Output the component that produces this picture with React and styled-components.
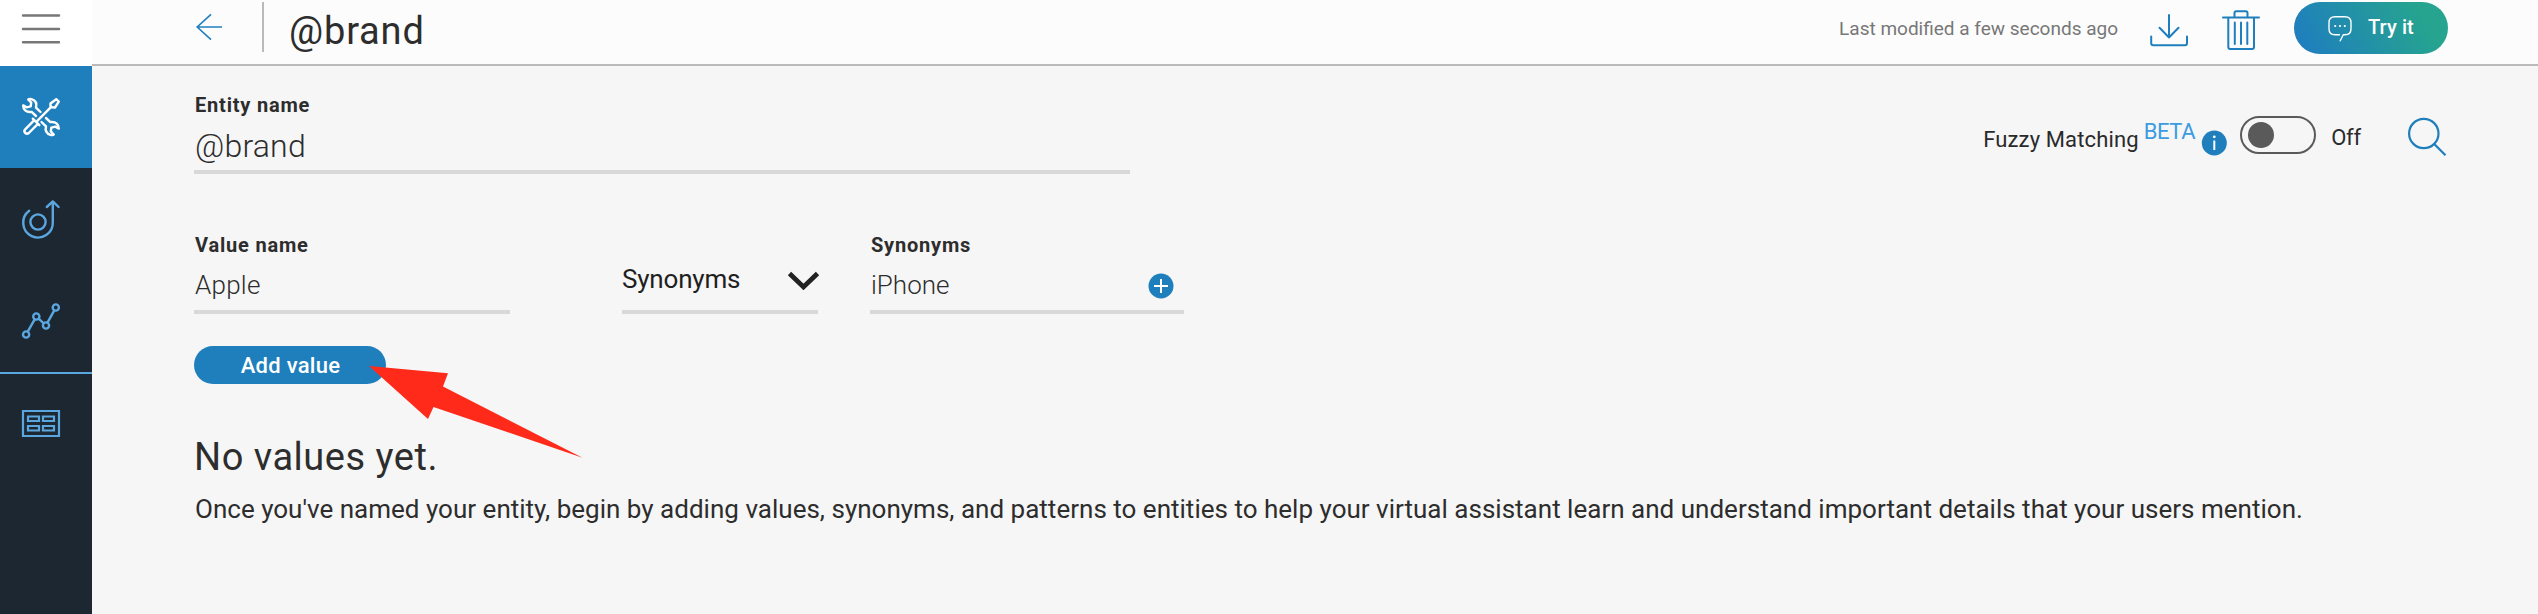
import React from "react";
import styled, { createGlobalStyle } from "styled-components";

const BLUE = "#1f7fbd";
const SKY = "#5aa7e0";

const Global = createGlobalStyle`
  *, *::before, *::after { box-sizing: border-box; }
  body { margin: 0; background: #f6f6f6; font-family: Roboto, sans-serif; color: #2d2d2d; }
  button { font-family: inherit; border: 0; padding: 0; background: none; cursor: pointer; }
  svg { display: block; flex: none; overflow: visible; }
`;

const Page = styled.div`
  position: relative;
  display: flex;
  height: 614px;
  overflow: hidden;
`;

const Sidebar = styled.nav`
  flex: none;
  width: 92px;
  display: flex;
  flex-direction: column;
  background: #1d2731;
`;

const NavItem = styled.button`
  display: flex;
  align-items: center;
  padding-left: 22px;
  height: 102px;
  background: ${(p) => (p.$active ? BLUE : "transparent")};
`;

const MenuButton = styled(NavItem)`
  height: 66px;
  padding-bottom: 9px;
  background: #fff;
`;

const DividedItem = styled(NavItem)`
  height: 101px;
  border-top: 2px solid ${SKY};
`;

const Column = styled.div`
  flex: 1;
  min-width: 0;
`;

const Header = styled.header`
  height: 66px;
  display: flex;
  justify-content: space-between;
  align-items: flex-start;
  padding: 0 90px 0 104px;
  background: #fcfcfc;
  border-bottom: 2px solid #bababa;
`;

const HeaderGroup = styled.div`
  display: flex;
  align-items: flex-start;
`;

const Separator = styled.div`
  width: 2px;
  height: 50px;
  margin: 2px 25px 0 6px;
  background: #bababa;
`;

const Title = styled.h1`
  margin: 11px 0 0;
  font-size: 38px;
  line-height: 40px;
  font-weight: 400;
  letter-spacing: 0.84px;
`;

const Modified = styled.span`
  margin: 17px 32px 0 0;
  font-size: 19px;
  line-height: 24px;
  color: #777;
`;

const IconButton = styled.button`
  margin: ${(p) => p.$top}px 34px 0 0;
`;

const TryButton = styled.button`
  display: flex;
  align-items: flex-start;
  width: 154px;
  height: 52px;
  margin-top: 2px;
  padding: 14px 0 0 34px;
  border-radius: 26px;
  background: linear-gradient(60deg, #1f7fbd 8%, #26a48f 82%);
  color: #fff;
  font-size: 20px;
  line-height: 24px;
  font-weight: 500;
  letter-spacing: 0.1px;
`;

const TryLabel = styled.span`
  margin: -1px 0 0 16px;
`;

const Main = styled.main`
  padding: 27px 92px 0 102px;
`;

const TopRow = styled.div`
  display: flex;
  justify-content: space-between;
  align-items: flex-start;
`;

const Field = styled.div`
  width: ${(p) => p.$width}px;
  margin-right: ${(p) => p.$gap || 0}px;
  border-bottom: 4px solid #d8d8d8;
`;

const Label = styled.div`
  padding-left: 1px;
  font-size: 20px;
  line-height: 24px;
  font-weight: 700;
  letter-spacing: 0.8px;
`;

const NameValue = styled.div`
  padding: 9px 0 4px 1px;
  font-size: 32px;
  line-height: 40px;
  font-weight: 300;
  letter-spacing: 0.2px;
`;

const ValueText = styled.div`
  display: flex;
  justify-content: space-between;
  align-items: center;
  padding: 12px 10px 9px 1px;
  font-size: 26px;
  line-height: 32px;
  font-weight: 300;
  letter-spacing: ${(p) => p.$spacing || 0}px;
`;

const SelectText = styled.div`
  display: flex;
  justify-content: space-between;
  padding-bottom: 15px;
  font-size: 26px;
  line-height: 32px;
  letter-spacing: -0.2px;
  color: #1f1f1f;
`;

const ValueRow = styled.div`
  display: flex;
  align-items: flex-end;
  margin-top: 59px;
`;

const Controls = styled.div`
  display: flex;
  align-items: flex-start;
  margin-top: 23px;
  font-size: 22px;
  line-height: 26px;
`;

const ControlText = styled.span`
  margin: ${(p) => p.$top}px ${(p) => p.$right}px 0 0;
  letter-spacing: ${(p) => p.$spacing}px;
  color: ${(p) => p.$color || "#2a2a2a"};
  white-space: nowrap;
`;

const InfoBadge = styled.div`
  width: 25px;
  height: 26px;
  margin: 14px 13px 0 0;
`;

const Toggle = styled.button`
  display: flex;
  align-items: center;
  width: 76px;
  height: 38px;
  margin-right: 15px;
  padding-left: 6px;
  border: 2px solid #5a5a5a;
  border-radius: 19px;
`;

const Knob = styled.span`
  width: 26px;
  height: 26px;
  border-radius: 50%;
  background: #5a5a5a;
`;

const SearchButton = styled.button`
  margin-top: 2px;
`;

const AddButton = styled.button`
  display: block;
  width: 192px;
  height: 38px;
  margin-top: 32px;
  padding-left: 1px;
  border-radius: 19px;
  background: ${BLUE};
  color: #fff;
  font-size: 22px;
  line-height: 37px;
  font-weight: 500;
  letter-spacing: 0.27px;
`;

const EmptyTitle = styled.h2`
  margin: 51px 0 0;
  font-size: 38px;
  line-height: 44px;
  font-weight: 400;
  letter-spacing: 0.52px;
`;

const EmptyText = styled.p`
  margin: 14px 0 0 1px;
  font-size: 26px;
  line-height: 32px;
  letter-spacing: 0.012px;
  white-space: nowrap;
`;

const Pointer = styled.svg`
  position: absolute;
  left: 369px;
  top: 366px;
`;

const MenuIcon = () => (
  <svg width="38" height="32" stroke="#777" strokeWidth="2.4" strokeLinecap="round">
    <path d="M1 2.5H37M1 16H37M1 29.3H37" />
  </svg>
);

const Wrench = "M7 2.2C4.8 1.3 8 .6 9.5 1.1C13.3 2.2 15 5.5 14 9.6L18.5 14M1.2 7.4C1 11.5 4 14.6 9.6 13.9L14 18M1.2 7.4L4.6 9.4L8.7 8.4L9.2 4.6L7 2.2";

const ToolsIcon = () => (
  <svg width="38" height="38" fill="none" stroke="#fff" strokeWidth="2.4" strokeLinecap="round" strokeLinejoin="round">
    <path d={Wrench} />
    <path d={Wrench} transform="rotate(180 19 19)" />
    <path d="M28.5 5.5L34.2 1.2L36.8 3.6L33 9.5L30 9.3L28.5 8Z" />
    <path d="M29.2 8.9L15.3 22.8M10.8 20.7L17.3 27.2M12.3 22.2L3.2 31.3C1 33.6 4.2 37.2 6.8 35L15.9 25.8" />
  </svg>
);

const IntentIcon = () => (
  <svg width="38" height="38" fill="none" stroke={SKY} strokeWidth="2.4" strokeLinecap="round" strokeLinejoin="round">
    <circle cx="16" cy="22" r="7.6" />
    <path d="M7.2 10.8A14.8 14.8 0 1 0 30.8 22V2M24.8 7L30.8 1.4L36.6 7" />
  </svg>
);

const ChartIcon = () => (
  <svg width="38" height="36" fill="none" stroke={SKY} strokeWidth="2.4">
    <circle cx="4.1" cy="31.5" r="3.1" />
    <circle cx="14.3" cy="13.5" r="3.1" />
    <circle cx="24" cy="22.5" r="3.1" />
    <circle cx="33.8" cy="4.5" r="3.1" />
    <path d="M5.7 28.7L12.7 16.3M16.6 15.6L21.7 20.4M25.5 19.7L32.3 7.3" />
  </svg>
);

const TableIcon = () => (
  <svg width="38" height="27" fill="none" stroke={SKY} strokeWidth="2.2">
    <path d="M1 1H37V26H1Z" />
    <path d="M6 6.5H17V11H6ZM21 6.5H32V11H21ZM6 16H17V20.5H6ZM21 16H32V20.5H21Z" />
  </svg>
);

const BackIcon = () => (
  <svg width="26" height="27" fill="none" stroke={BLUE} strokeWidth="1.6">
    <path d="M26 13H1.2M15 .3L1.2 13L15 25.7" />
  </svg>
);

const DownloadIcon = () => (
  <svg width="38" height="33" fill="none" stroke={BLUE} strokeWidth="2" strokeLinecap="round" strokeLinejoin="round">
    <path d="M19 1V23.5M9.5 13.8L19 23.5L28.5 13.8M1.2 22.5V29Q1.2 31.2 3.2 31.2H35Q37 31.2 37 29V22.5" />
  </svg>
);

const TrashIcon = () => (
  <svg width="38" height="40" fill="none" stroke={BLUE} strokeWidth="2" strokeLinecap="round" strokeLinejoin="round">
    <path d="M1 7.5H37M12.5 7.5V3Q12.5 1.2 14.3 1.2H23.7Q25.5 1.2 25.5 3V7.5M6.3 7.5V37Q6.3 39 8.3 39H30Q32 39 32 37V7.5M12.8 12.5V34M19 12.5V34M25.3 12.5V34" />
  </svg>
);

const ChatIcon = () => (
  <svg width="24" height="26" fill="none" stroke="#fff" strokeWidth="1.4" strokeLinecap="round" strokeLinejoin="round">
    <path d="M11.5 18.7H7Q1 18.7 1 12.7V6.7Q1 .8 7 .8H17Q23 .8 23 6.7V12.7Q23 18.7 17 18.7H15.3L12.2 24.8" />
    <path strokeWidth="2.2" d="M7.2 10H7.21M12 10H12.01M16.8 10H16.81" />
  </svg>
);

const InfoIcon = () => (
  <svg width="25" height="26">
    <circle cx="12.3" cy="13" r="12.5" fill={BLUE} />
    <path d="M12.3 10.5V20" stroke="#fff" strokeWidth="2" />
    <circle cx="12.3" cy="6.8" r="1.4" fill="#fff" />
  </svg>
);

const SearchIcon = () => (
  <svg width="38" height="38" fill="none" stroke={BLUE} strokeWidth="2.2">
    <circle cx="15.8" cy="15.5" r="14.7" />
    <path d="M26.2 26L37.5 37.3" />
  </svg>
);

const ChevronIcon = () => (
  <svg width="31" height="32" fill="none" stroke="#222" strokeWidth="4.8">
    <path d="M2.5 10.5L16.5 24L30.5 10.5" />
  </svg>
);

const PlusIcon = () => (
  <svg width="26" height="26">
    <circle cx="13" cy="14" r="12.5" fill={BLUE} />
    <path d="M6 14H20M13 7V21" stroke="#fff" strokeWidth="2" />
  </svg>
);

export default function App() {
  return (
    <Page>
      <Global />
      <Sidebar>
        <MenuButton aria-label="Menu">
          <MenuIcon />
        </MenuButton>
        <NavItem $active aria-label="Build">
          <ToolsIcon />
        </NavItem>
        <NavItem aria-label="Improve">
          <IntentIcon />
        </NavItem>
        <NavItem aria-label="Analytics">
          <ChartIcon />
        </NavItem>
        <DividedItem aria-label="Workspaces">
          <TableIcon />
        </DividedItem>
      </Sidebar>
      <Column>
        <Header>
          <HeaderGroup>
            <IconButton $top={14} aria-label="Back">
              <BackIcon />
            </IconButton>
            <Separator />
            <Title>@brand</Title>
          </HeaderGroup>
          <HeaderGroup>
            <Modified>Last modified a few seconds ago</Modified>
            <IconButton $top={14} aria-label="Download">
              <DownloadIcon />
            </IconButton>
            <IconButton $top={10} aria-label="Delete">
              <TrashIcon />
            </IconButton>
            <TryButton>
              <ChatIcon />
              <TryLabel>Try it</TryLabel>
            </TryButton>
          </HeaderGroup>
        </Header>
        <Main>
          <TopRow>
            <Field $width={936}>
              <Label>Entity name</Label>
              <NameValue>@brand</NameValue>
            </Field>
            <Controls>
              <ControlText $top={11} $right={5} $spacing={0.13}>Fuzzy Matching</ControlText>
              <ControlText $top={3} $right={7} $spacing={-0.4} $color="#3d9be0">BETA</ControlText>
              <InfoBadge>
                <InfoIcon />
              </InfoBadge>
              <Toggle aria-label="Fuzzy matching">
                <Knob />
              </Toggle>
              <ControlText $top={9} $right={47} $spacing={-0.2}>Off</ControlText>
              <SearchButton aria-label="Search">
                <SearchIcon />
              </SearchButton>
            </Controls>
          </TopRow>
          <ValueRow>
            <Field $width={316} $gap={112}>
              <Label>Value name</Label>
              <ValueText $spacing={0.25}>Apple</ValueText>
            </Field>
            <Field $width={196} $gap={52}>
              <SelectText>
                Synonyms
                <ChevronIcon />
              </SelectText>
            </Field>
            <Field $width={314}>
              <Label>Synonyms</Label>
              <ValueText>
                iPhone
                <PlusIcon />
              </ValueText>
            </Field>
          </ValueRow>
          <AddButton>Add value</AddButton>
          <EmptyTitle>No values yet.</EmptyTitle>
          <EmptyText>
            Once you've named your entity, begin by adding values, synonyms, and patterns to entities to help your
            virtual assistant learn and understand important details that your users mention.
          </EmptyText>
        </Main>
      </Column>
      <Pointer width="213" height="92">
        <path d="M0 0L79 7.3L74 20.5L213.5 91.7L64.5 41L59 53Z" fill="#ff2a1a" />
      </Pointer>
    </Page>
  );
}
